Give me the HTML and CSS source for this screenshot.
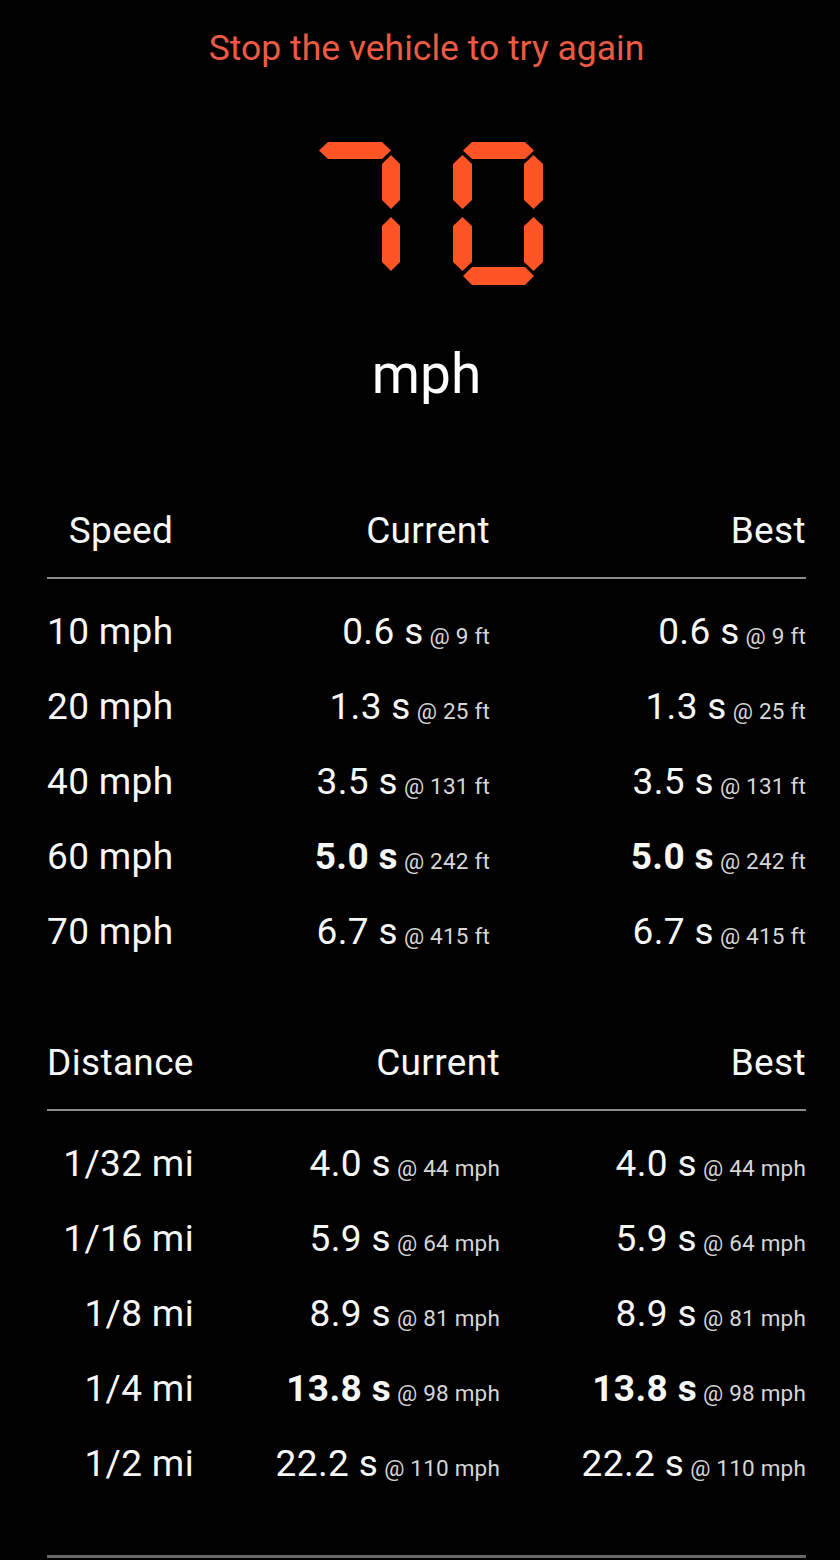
FILE: index.html
```html
<!DOCTYPE html>
<html lang="en">
<head>
<meta charset="utf-8">
<title>Drag timer</title>
<link rel="stylesheet" href="styles.css">
</head>
<body>
<main class="screen">
  <p class="notice">Stop the vehicle to try again</p>

  <div class="speedo">
    <svg class="digits" width="241" height="180" viewBox="306 120 241 180" aria-label="70">
      <g fill="#ff5426">
        <!-- 7 -->
        <polygon points="319,150.5 328,142 382,142 391,150.5 382,159 328,159"/>
        <polygon points="391,155 400,164 400,200 391,209 382,200 382,164"/>
        <polygon points="391,217 400,226 400,262 391,271 382,262 382,226"/>
        <!-- 0 -->
        <polygon points="463,150.5 472,142 525,142 534,150.5 525,159 472,159"/>
        <polygon points="462.5,155 472,164 472,200 462.5,209 453,200 453,164"/>
        <polygon points="462.5,217 472,226 472,262 462.5,271 453,262 453,226"/>
        <polygon points="533.5,155 543,164 543,200 533.5,209 524,200 524,164"/>
        <polygon points="533.5,217 543,226 543,262 533.5,271 524,262 524,226"/>
        <polygon points="463,276 472,267 525,267 534,276 525,285 472,285"/>
      </g>
    </svg>
  </div>

  <div class="unit">mph</div>

  <section class="table speed">
    <div class="head">
      <span class="c1">Speed</span>
      <span class="c2">Current</span>
      <span class="c3">Best</span>
    </div>
    <div class="row">
      <span class="c1">10 mph</span>
      <span class="c2">0.6 s<small>@ 9 ft</small></span>
      <span class="c3">0.6 s<small>@ 9 ft</small></span>
    </div>
    <div class="row">
      <span class="c1">20 mph</span>
      <span class="c2">1.3 s<small>@ 25 ft</small></span>
      <span class="c3">1.3 s<small>@ 25 ft</small></span>
    </div>
    <div class="row">
      <span class="c1">40 mph</span>
      <span class="c2">3.5 s<small>@ 131 ft</small></span>
      <span class="c3">3.5 s<small>@ 131 ft</small></span>
    </div>
    <div class="row">
      <span class="c1">60 mph</span>
      <span class="c2"><b>5.0 s</b><small>@ 242 ft</small></span>
      <span class="c3"><b>5.0 s</b><small>@ 242 ft</small></span>
    </div>
    <div class="row">
      <span class="c1">70 mph</span>
      <span class="c2">6.7 s<small>@ 415 ft</small></span>
      <span class="c3">6.7 s<small>@ 415 ft</small></span>
    </div>
  </section>

  <section class="table distance">
    <div class="head">
      <span class="c1">Distance</span>
      <span class="c2">Current</span>
      <span class="c3">Best</span>
    </div>
    <div class="row">
      <span class="c1">1/32 mi</span>
      <span class="c2">4.0 s<small>@ 44 mph</small></span>
      <span class="c3">4.0 s<small>@ 44 mph</small></span>
    </div>
    <div class="row">
      <span class="c1">1/16 mi</span>
      <span class="c2">5.9 s<small>@ 64 mph</small></span>
      <span class="c3">5.9 s<small>@ 64 mph</small></span>
    </div>
    <div class="row">
      <span class="c1">1/8 mi</span>
      <span class="c2">8.9 s<small>@ 81 mph</small></span>
      <span class="c3">8.9 s<small>@ 81 mph</small></span>
    </div>
    <div class="row">
      <span class="c1">1/4 mi</span>
      <span class="c2"><b>13.8 s</b><small>@ 98 mph</small></span>
      <span class="c3"><b>13.8 s</b><small>@ 98 mph</small></span>
    </div>
    <div class="row">
      <span class="c1">1/2 mi</span>
      <span class="c2">22.2 s<small>@ 110 mph</small></span>
      <span class="c3">22.2 s<small>@ 110 mph</small></span>
    </div>
  </section>

  <div class="footer-rule"></div>
</main>
</body>
</html>
```

FILE: styles.css
```css
html, body {
  margin: 0;
  padding: 0;
  background: #000;
}

body {
  width: 840px;
  height: 1560px;
  overflow: hidden;
  font-family: Roboto, "Noto Sans", "Liberation Sans", sans-serif;
  color: #f7f7f7;
}

.screen {
  display: flex;
  flex-direction: column;
  margin-left: 47px;
  width: 759px;
}

.notice {
  margin: 28px 0 0;
  text-align: center;
  font-size: 35.5px;
  line-height: 40px;
  color: #ec5a44;
}

.speedo {
  display: flex;
  justify-content: center;
  margin-top: 52px;
}

.digits {
  display: block;
}

.unit {
  margin-top: 44px;
  text-align: center;
  font-size: 55px;
  line-height: 60px;
  color: #fff;
}

.table {
  display: grid;
  font-size: 37px;
  letter-spacing: 0.35px;
}

.speed {
  grid-template-columns: 148px 295px 1fr;
  margin-top: 103px;
}

.distance {
  grid-template-columns: 148px 305px 1fr;
  margin-top: 70px;
}

.head,
.row {
  display: contents;
}

.head span {
  height: 48px;
  line-height: 48px;
  padding-bottom: 22px;
  border-bottom: 2px solid #8a8a8a;
  margin-bottom: 15px;
}

.row span {
  height: 75px;
  line-height: 75px;
  white-space: nowrap;
}

.c2,
.c3 {
  text-align: right;
}

.speed .head .c1 {
  text-align: center;
}

.speed .row .c1 {
  text-align: left;
}

.distance .head .c1 {
  text-align: left;
}

.distance .row .c1 {
  text-align: right;
  padding-right: 1px;
}

b {
  font-weight: 700;
}

small {
  font-size: 22.5px;
  letter-spacing: 0.2px;
  margin-left: 6px;
  color: #d6d6d6;
}

.footer-rule {
  margin-top: 54px;
  height: 3px;
  background: #686868;
}
```
